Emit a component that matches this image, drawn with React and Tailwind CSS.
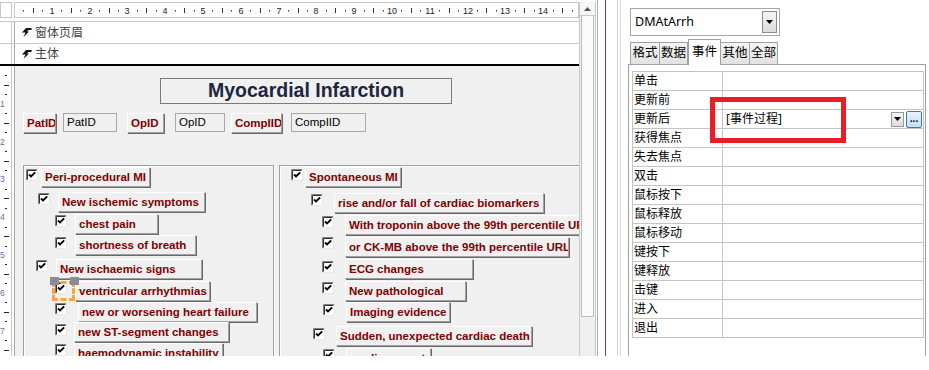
import React from "react";

const CJK = "font-['Noto_Sans','Noto_Sans_CJK_SC',sans-serif]";

// 勾选框
function Check({ className = "" }) {
  return (
    <svg width="12" height="12" viewBox="0 0 12 12" className={"shrink-0 " + className}>
      <rect width="12" height="12" fill="#fff" />
      <path d="M0.5 11.5V0.5H11.5" stroke="#808080" fill="none" />
      <path d="M1.5 10.5V1.5H10.5" stroke="#303030" fill="none" />
      <path d="M11.5 0V11.5H0" stroke="#e6e6e6" fill="none" />
      <path d="M3 5.5L5 7.5L9.2 3.3" stroke="#000" strokeWidth="1.9" fill="none" />
    </svg>
  );
}

// 凸起的标签按钮
function Btn({ className = "", children }) {
  return (
    <div
      className={
        "h-[20px] shrink-0 bg-[#f0f0f0] border border-t-white border-l-white border-r-[#a0a0a0] border-b-[#a0a0a0] shadow-[1px_1px_0_#6a6a6a] pl-[3px] text-[11.5px] font-bold text-[#800000] leading-[18px] whitespace-nowrap overflow-hidden " +
        className
      }
    >
      {children}
    </div>
  );
}

function Row({ row, cb, cbTop, btn, children }) {
  return (
    <div className={"flex items-start shrink-0 " + row}>
      <Check className={cb + " " + cbTop} />
      <Btn className={btn}>{children}</Btn>
    </div>
  );
}

function TextBox({ className = "", children }) {
  return (
    <div
      className={
        "h-[19px] shrink-0 border border-[#a8a8a8] bg-[#f0f0f0] pl-[3px] text-[11.5px] text-black leading-[17px] " +
        className
      }
    >
      {children}
    </div>
  );
}

function TopRuler() {
  const ticks = [];
  for (let i = 1; i < 60; i++) {
    const x = Math.round(i * 9.45 - 1);
    if (i % 4 === 0)
      ticks.push(
        <text key={i} x={x} y="10.5" fontSize="9" textAnchor="middle" fill="#222">
          {i / 4}
        </text>
      );
    else if (i % 2 === 0) ticks.push(<rect key={i} x={x} y="5" width="1" height="5" fill="#333" />);
    else ticks.push(<rect key={i} x={x} y="7" width="1" height="1.5" fill="#333" />);
  }
  return (
    <div className="ml-[2px] w-[565px] h-[16px] border border-[#c8c8c8] bg-white overflow-hidden">
      <svg width="563" height="14" className="block">
        {ticks}
      </svg>
    </div>
  );
}

function LeftRuler() {
  const ticks = [];
  for (let i = 1; i < 31; i++) {
    const y = Math.round(i * 9.45);
    if (i % 4 === 0)
      ticks.push(
        <text key={i} x="0" y={y + 3} fontSize="8.5" fill="#5573ad">
          {i / 4}
        </text>
      );
    else if (i % 2 === 0) ticks.push(<rect key={i} x="4" y={y} width="5" height="1" fill="#222" />);
    else ticks.push(<rect key={i} x="5" y={y} width="2" height="1" fill="#222" />);
  }
  return (
    <svg width="11" height="290" className="block">
      {ticks}
    </svg>
  );
}

function SectionIcon() {
  return (
    <svg width="10" height="9" viewBox="0 0 10 9" className="shrink-0">
      <path d="M9.5 0L4 0L0 4.5L3.5 4.5L1.5 9L7 3.5L5 3.5L6.5 2L9.5 2Z" fill="#111" />
    </svg>
  );
}

const events = [
  "单击",
  "更新前",
  "更新后",
  "获得焦点",
  "失去焦点",
  "双击",
  "鼠标按下",
  "鼠标释放",
  "鼠标移动",
  "键按下",
  "键释放",
  "击键",
  "进入",
  "退出",
];

export default function App() {
  return (
    <div className="relative w-[929px] h-[370px] bg-white overflow-hidden flex items-start font-['Liberation_Sans',Arial,sans-serif]">
      {/* 设计区 */}
      <div className="flex h-[356px]">
        <div className="w-[579px] flex flex-col">
          {/* 标尺 */}
          <div className="h-[21px] pt-[2px] flex items-start shrink-0">
            <div className="w-[12px] h-[16px] border border-[#c8c8c8]" />
            <TopRuler />
          </div>

          {/* 窗体页眉 */}
          <div className="h-[22px] shrink-0 flex border-t border-[#c8c8c8]">
            <div className="w-[12px] border-r border-[#c8c8c8]" />
            <div className="w-[2px]" />
            <div className="w-[1px] bg-[#a8a8a8]" />
            <div className={"flex-1 flex items-center gap-[3px] pl-[7px] text-[12px] text-[#444] " + CJK}>
              <SectionIcon />
              <span>窗体页眉</span>
            </div>
          </div>

          {/* 主体 */}
          <div className="h-[21px] shrink-0 flex border-t border-[#c8c8c8]">
            <div className="w-[12px] border-r border-[#c8c8c8]" />
            <div className="w-[2px]" />
            <div className="w-[1px] bg-[#a8a8a8]" />
            <div className={"flex-1 flex items-center gap-[3px] pl-[7px] text-[12px] text-[#444] " + CJK}>
              <SectionIcon />
              <span>主体</span>
            </div>
          </div>
          <div className="h-[2px] shrink-0 bg-black" />

          {/* 主体内容 */}
          <div className="h-[290px] shrink-0 flex">
            <div className="w-[12px] border-r border-[#c8c8c8]">
              <LeftRuler />
            </div>
            <div className="w-[2px]" />
            <div className="w-[1px] bg-[#a8a8a8]" />
            <div className="flex-1 bg-[#f0f0f0] overflow-hidden flex flex-col">
              <div className="mt-[12px] ml-[145px] w-[292px] h-[26px] shrink-0 border border-[#7a7a7a] flex items-center justify-center text-[19.5px] font-bold text-[#1e2540] leading-none">
                Myocardial Infarction
              </div>

              <div className="mt-[9px] flex items-start shrink-0">
                <Btn className="ml-[8px] w-[33px]">PatID</Btn>
                <TextBox className="ml-[7px] w-[54px]">PatID</TextBox>
                <Btn className="ml-[10px] w-[37px]">OpID</Btn>
                <TextBox className="ml-[11px] w-[50px]">OpID</TextBox>
                <Btn className="ml-[6px] w-[51px]">CompIID</Btn>
                <TextBox className="ml-[9px] w-[75px]">CompIID</TextBox>
              </div>

              <div className="mt-[32px] flex items-start shrink-0">
                {/* 左组 */}
                <div className="ml-[8px] w-[251px] h-[200px] shrink-0 border border-[#a0a0a0] shadow-[inset_1px_1px_0_#fff,1px_1px_0_#fff] flex flex-col">
                  <Row row="mt-[1px]" cb="ml-[2px]" cbTop="mt-[2px]" btn="ml-[3px] w-[109px]">
                    Peri-procedural MI
                  </Row>
                  <Row row="mt-[5px]" cb="ml-[14px]" cbTop="mt-[1px]" btn="ml-[8px] w-[147px]">
                    New ischemic symptoms
                  </Row>
                  <Row row="mt-[2px]" cb="ml-[31px]" cbTop="mt-[1px]" btn="ml-[8px] w-[83px]">
                    chest pain
                  </Row>
                  <Row row="mt-[1px]" cb="ml-[31px]" cbTop="mt-[2px]" btn="ml-[8px] w-[121px]">
                    shortness of breath
                  </Row>
                  <Row row="mt-[4px]" cb="ml-[12px]" cbTop="mt-[1px]" btn="ml-[8px] w-[146px]">
                    New ischaemic signs
                  </Row>
                  <Row row="mt-[2px]" cb="ml-[31px]" cbTop="mt-[1px]" btn="ml-[8px] w-[135px]">
                    ventricular arrhythmias
                  </Row>
                  <Row row="mt-[1px]" cb="ml-[31px]" cbTop="mt-[1px]" btn="ml-[11px] w-[179px]">
                    new or worsening heart failure
                  </Row>
                  <Row row="mt-0" cb="ml-[31px]" cbTop="mt-[2px]" btn="ml-[7px] w-[155px]">
                    new ST-segment changes
                  </Row>
                  <Row row="mt-[1px]" cb="ml-[31px]" cbTop="mt-[1px]" btn="ml-[7px] w-[149px]">
                    haemodynamic instability
                  </Row>
                </div>

                {/* 右组 */}
                <div className="ml-[5px] w-[330px] h-[200px] shrink-0 border border-[#a0a0a0] shadow-[inset_1px_1px_0_#fff] flex flex-col">
                  <Row row="mt-[1px]" cb="ml-[11px]" cbTop="mt-[2px]" btn="ml-[2px] w-[96px]">
                    Spontaneous MI
                  </Row>
                  <Row row="mt-[6px]" cb="ml-[31px]" cbTop="mt-[1px]" btn="ml-[11px] w-[210px]">
                    rise and/or fall of cardiac biomarkers
                  </Row>
                  <Row row="mt-[2px]" cb="ml-[42px]" cbTop="mt-[1px]" btn="ml-[11px] w-[250px]">
                    With troponin above the 99th percentile URL
                  </Row>
                  <Row row="mt-[2px]" cb="ml-[42px]" cbTop="mt-0" btn="ml-[11px] w-[224px]">
                    or CK-MB above the 99th percentile URL
                  </Row>
                  <Row row="mt-[2px]" cb="ml-[42px]" cbTop="mt-[2px]" btn="ml-[11px] w-[128px]">
                    ECG changes
                  </Row>
                  <Row row="mt-[2px]" cb="ml-[42px]" cbTop="mt-[1px]" btn="ml-[11px] w-[121px]">
                    New pathological
                  </Row>
                  <Row row="mt-[1px]" cb="ml-[43px]" cbTop="mt-[2px]" btn="ml-[11px] w-[104px]">
                    Imaging evidence
                  </Row>
                  <Row row="mt-[4px]" cb="ml-[33px]" cbTop="mt-[2px]" btn="ml-[11px] w-[196px]">
                    Sudden, unexpected cardiac death
                  </Row>
                  <Row row="mt-[2px]" cb="ml-[43px]" cbTop="mt-[1px]" btn="ml-[11px] w-[85px]">
                    cardiac arrest
                  </Row>
                </div>
              </div>
            </div>
          </div>
        </div>

        {/* 滚动条 */}
        <div className="w-[17px] pt-[2px] flex flex-col">
          <div className="flex-1 border-l border-r border-[#c8c8c8] bg-[#f0f0f0] flex flex-col">
            <div className="h-[14px] shrink-0 border-b border-[#c8c8c8] bg-[#f6f6f6] flex items-center justify-center">
              <svg width="7" height="4" viewBox="0 0 7 4">
                <path d="M0 4L3.5 0L7 4Z" fill="#555" />
              </svg>
            </div>
            <div className="mx-[1px] h-[301px] shrink-0 border border-[#bdbdbd] border-t-0 bg-[#fafafa]" />
          </div>
        </div>
      </div>

      {/* 属性表 */}
      <div className="flex-1 h-[356px] flex">
        <div className="ml-[1px] w-[1px] bg-[#b0b0b0]" />
        <div className="ml-[7px] w-[1px] bg-[#9c3a3a]" />
        <div className="ml-[11px] w-[1px] bg-[#d4d4d4]" />
        <div className="ml-[2px] w-[1px] bg-[#dcdcdc]" />
        <div className={"flex-1 flex flex-col " + CJK}>
          <div className="mt-[8px] ml-[9px] w-[150px] h-[28px] shrink-0 border border-[#a8a8a8] bg-white flex items-center">
            <span className="pl-[4px] text-[12.5px] text-black">DMAtArrh</span>
            <div className="ml-auto mr-[2px] w-[15px] h-[22px] border border-[#8a8a8a] bg-gradient-to-b from-[#f4f4f4] to-[#dcdcdc] flex items-center justify-center">
              <svg width="7" height="4" viewBox="0 0 7 4">
                <path d="M0 0L7 0L3.5 4Z" fill="#000" />
              </svg>
            </div>
          </div>

          {/* 选项卡 */}
          <div className="mt-[3px] ml-[9px] h-[25px] shrink-0 flex items-end text-[12.5px] text-black relative z-10">
            <div className="w-[30px] h-[22px] border border-b-0 border-[#a0a0a0] bg-gradient-to-b from-[#f4f4f4] to-[#e2e2e2] flex items-center justify-center">
              格式
            </div>
            <div className="w-[28px] h-[22px] border border-l-0 border-b-0 border-[#a0a0a0] bg-gradient-to-b from-[#f4f4f4] to-[#e2e2e2] flex items-center justify-center">
              数据
            </div>
            <div className="w-[33px] h-[26px] -mb-[1px] border border-b-0 border-[#a0a0a0] bg-white flex items-center justify-center">
              事件
            </div>
            <div className="w-[29px] h-[22px] border border-l-0 border-b-0 border-[#a0a0a0] bg-gradient-to-b from-[#f4f4f4] to-[#e2e2e2] flex items-center justify-center">
              其他
            </div>
            <div className="w-[28px] h-[22px] border border-l-0 border-b-0 border-[#a0a0a0] bg-gradient-to-b from-[#f4f4f4] to-[#e2e2e2] flex items-center justify-center">
              全部
            </div>
          </div>

          <div className="ml-[7px] w-[298px] flex-1 border border-b-0 border-[#a0a0a0] bg-white pt-[6px] pl-[3px]">
            <div className="w-[292px] border-t border-l border-[#c4c4c4] text-[12px] text-black">
              {events.map((e) => (
                <div key={e} className="h-[19px] flex border-b border-[#c4c4c4]">
                  <div className="w-[90px] border-r border-[#c4c4c4] pl-[1px] leading-[18px]">{e}</div>
                  <div className="flex-1 border-r border-[#c4c4c4] flex items-center">
                    {e === "更新后" && (
                      <>
                        <span className="pl-[3px]">[事件过程]</span>
                        <div className="ml-auto w-[13px] h-[15px] border border-[#9a9a9a] bg-gradient-to-b from-[#f4f4f4] to-[#dcdcdc] flex items-center justify-center">
                          <svg width="7" height="4" viewBox="0 0 7 4">
                            <path d="M0 0L7 0L3.5 4Z" fill="#000" />
                          </svg>
                        </div>
                        <div className="ml-[2px] mr-[1px] w-[16px] h-[17px] rounded-[2px] border border-[#3d7bad] bg-gradient-to-b from-[#e8f3fd] to-[#c6def5] flex items-center justify-center text-[10px] font-bold leading-none text-black pb-[3px]">
                          ...
                        </div>
                      </>
                    )}
                  </div>
                </div>
              ))}
            </div>
          </div>
        </div>
      </div>

      {/* 选中控件的手柄 */}
      <div className="absolute left-[52px] top-[281px] w-[23px] h-[20px] border-[3px] border-dashed border-[#f6a63c]" />
      <div className="absolute left-[50px] top-[277px] w-[9px] h-[8px] bg-[#8c8c8c]" />
      <div className="absolute left-[70px] top-[277px] w-[9px] h-[8px] bg-[#8c8c8c]" />

      {/* 红框标注 */}
      <div className="absolute left-[710px] top-[97px] w-[136px] h-[46px] border-[5px] border-[#ec1c24]" />
    </div>
  );
}
